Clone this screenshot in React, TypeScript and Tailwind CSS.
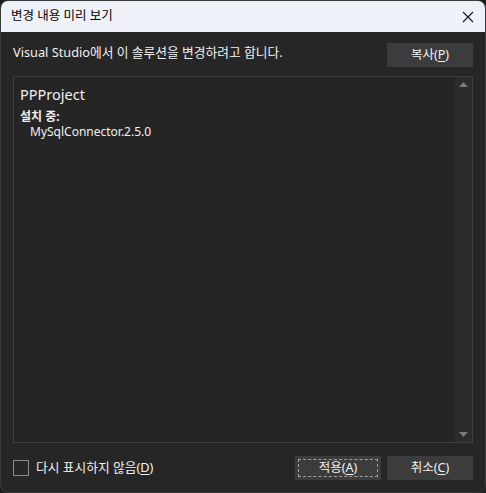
import React from "react";

const font = { fontFamily: '"Noto Sans", "Noto Sans CJK KR", sans-serif' };

function Btn({ label, k, focused }: { label: string; k: string; focused?: boolean }) {
  return (
    <button className="relative flex h-[24px] w-[86px] items-center justify-center bg-[#3c3c3c] text-[12.5px] text-[#f1f1f1]">
      {focused ? <span className="absolute inset-[3px] border border-dashed border-[#a0a0a0]" /> : null}
      <span className="relative">
        {label}(<span className="underline underline-offset-2">{k}</span>)
      </span>
    </button>
  );
}

export default function App() {
  return (
    <div className="h-[493px] w-[486px] bg-[#1c1c1c]" style={font}>
      <div className="flex h-full flex-col overflow-hidden rounded-t-[8px] rounded-b-[8px] border border-[#3a3a3a] bg-[#262626]">
        <div className="flex h-[31px] shrink-0 items-center justify-between bg-[#eef2f8] pl-[10px] pr-[10px]">
          <span className="text-[12.5px] text-black">변경 내용 미리 보기</span>
          <svg width="12" height="12" viewBox="0 0 12 12" className="mr-[1px]">
            <path d="M1 1 L11 11 M11 1 L1 11" stroke="#1a1a1a" strokeWidth="1.2" />
          </svg>
        </div>
        <div className="flex flex-1 flex-col px-[12px] pt-[11px] pb-[12px]">
          <div className="flex items-start justify-between">
            <span className="text-[12.75px] text-[#f1f1f1]">Visual Studio에서 이 솔루션을 변경하려고 합니다.</span>
            <Btn label="복사" k="P" />
          </div>
          <div className="mt-[9px] flex h-[367px] border border-[#3f3f3f] bg-[#252525]">
            <div className="flex-1 px-[6px] pt-[6px] text-[#f1f1f1]">
              <div className="text-[14.5px] leading-[22px]">PPProject</div>
              <div className="mt-[4px] text-[12px] font-bold leading-[15px]">설치 중:</div>
              <div className="pl-[10px] text-[12px] leading-[15px]">MySqlConnector.2.5.0</div>
            </div>
            <div className="flex w-[17px] flex-col items-center justify-between bg-[#2b2b2b] py-[5px]">
              <svg width="9" height="5" viewBox="0 0 9 5"><path d="M0 5 L4.5 0 L9 5 Z" fill="#7a7a7a" /></svg>
              <svg width="9" height="5" viewBox="0 0 9 5"><path d="M0 0 L4.5 5 L9 0 Z" fill="#7a7a7a" /></svg>
            </div>
          </div>
          <div className="mt-[13px] flex items-center justify-between">
            <label className="flex items-center gap-[7px] text-[12.75px] text-[#f1f1f1]">
              <span className="h-[16px] w-[16px] border border-[#8a8a8a]" />
              <span>
                다시 표시하지 않음(<span className="underline underline-offset-2">D</span>)
              </span>
            </label>
            <div className="flex gap-[6px]">
              <Btn label="적용" k="A" focused />
              <Btn label="취소" k="C" />
            </div>
          </div>
        </div>
      </div>
    </div>
  );
}
